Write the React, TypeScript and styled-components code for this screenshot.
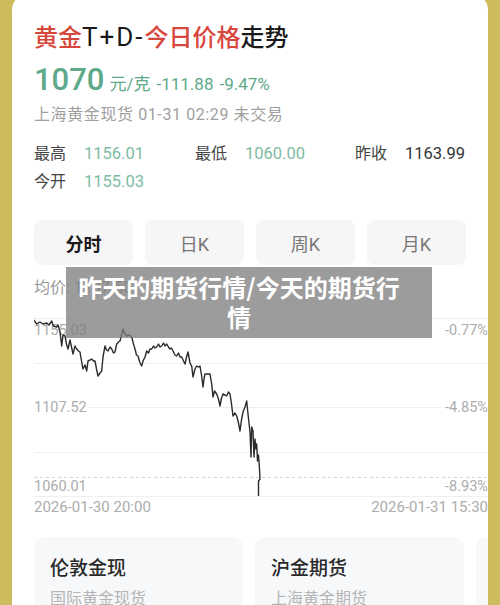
import React from "react";
import styled, { createGlobalStyle } from "styled-components";

const GlobalStyle = createGlobalStyle`
  html, body { margin: 0; padding: 0; }
  body {
    background: #cdbc5d;
    font-family: "Roboto", "Noto Sans CJK SC", sans-serif;
    overflow: hidden;
  }
`;

const Page = styled.div`
  position: relative;
  width: 500px;
  height: 605px;
  overflow: hidden;
`;

const Card = styled.div`
  margin: -6px 12px 0;
  height: 611px;
  background: #ffffff;
  border-radius: 16px 16px 0 0;
  padding: 26px 22px 0;
  box-sizing: border-box;
  overflow: hidden;
`;

const Title = styled.h1`
  margin: 0;
  font-size: 24px;
  line-height: 32px;
  font-weight: 500;
  color: #1a1a1a;
  font-family: "Noto Sans CJK SC", sans-serif;
`;

const Red = styled.span`
  color: #d8473c;
`;

const Latin = styled.span`
  font-family: "Roboto", "Noto Sans CJK SC", sans-serif;
  font-size: 26px;
  font-weight: 400;
  letter-spacing: 2px;
`;

const PriceRow = styled.div`
  margin-top: 7px;
  display: flex;
  align-items: baseline;
  gap: 6px;
  color: #5ea98a;
`;

const BigPrice = styled.span`
  font-size: 31px;
  line-height: 40px;
  font-weight: 500;
  margin-right: -1px;
`;

const Small = styled.span`
  font-size: 17px;
`;

const Info = styled.div`
  margin-top: 4px;
  font-size: 16px;
  line-height: 22px;
  letter-spacing: 0.6px;
  color: #a0a0a0;
`;

const Stats = styled.div`
  margin-top: 14px;
  display: grid;
  grid-template-columns: 161px 160px 1fr;
`;

const Stat = styled.div`
  display: flex;
  font-size: 16px;
  line-height: 28px;
`;

const StatLabel = styled.span`
  width: 50px;
  color: #444;
`;

const StatValue = styled.span<{ $dark?: boolean }>`
  color: ${(p) => (p.$dark ? "#333" : "#7dbca3")};
  font-size: 16.5px;
`;

const Tabs = styled.div`
  margin-top: 24px;
  display: grid;
  grid-template-columns: repeat(4, 1fr);
  gap: 12px;
`;

const Tab = styled.div<{ $active?: boolean }>`
  height: 45px;
  border-radius: 8px;
  background: #f6f6f6;
  display: flex;
  align-items: center;
  justify-content: center;
  font-size: 18px;
  font-weight: ${(p) => (p.$active ? 700 : 400)};
  color: ${(p) => (p.$active ? "#1a1a1a" : "#777")};
`;

const AvgLine = styled.div`
  margin-top: 12px;
  font-size: 16px;
  line-height: 22px;
  color: #999;
`;

const ChartWrap = styled.div`
  margin-right: -22px;
  height: 220px;
`;

const Cards = styled.div`
  margin-top: 18px;
  margin-right: -22px;
  display: flex;
  gap: 12px;
  overflow: hidden;
`;

const MiniCard = styled.div`
  flex: 0 0 209px;
  box-sizing: border-box;
  height: 90px;
  border-radius: 10px;
  background: #f7f8fa;
  padding: 20px 16px 0;
`;

const MiniTitle = styled.div`
  font-size: 19px;
  line-height: 24px;
  color: #2a2a2a;
  font-weight: 500;
`;

const MiniSub = styled.div`
  margin-top: 7px;
  font-size: 16px;
  line-height: 22px;
  color: #b5b5b5;
`;

const Overlay = styled.div`
  position: absolute;
  left: 66px;
  top: 267px;
  width: 366px;
  height: 71px;
  box-sizing: border-box;
  padding: 5px 32px 0 12px;
  background: rgba(125, 125, 125, 0.76);
  color: #ffffff;
  font-family: "Noto Sans CJK SC", sans-serif;
  font-weight: 700;
  font-size: 24px;
  line-height: 30px;
  text-align: center;
`;

const raw: [number, number][] = [
  [33, 320], [36.7, 325], [40, 323], [43, 325], [46.7, 324], [49, 326], [51.7, 322], [53.3, 327],
  [56.7, 328], [58, 326], [60, 333], [61.7, 347], [63, 336], [65, 337], [66.5, 345], [68, 350],
  [70, 341], [71.5, 348], [73, 355], [75, 347], [76.7, 350], [78.5, 352], [80, 353], [81.5, 362],
  [83, 370], [85, 366], [86.7, 372], [88, 362], [90, 361], [91.7, 360], [93.5, 362], [95, 362],
  [96.5, 370], [98, 377], [100, 374], [101.7, 372], [103, 358], [105, 347], [106.5, 351], [108, 352],
  [110, 348], [111.7, 350], [113.5, 354], [115, 353], [116.7, 345], [118.5, 343], [120, 342],
  [121.5, 336], [123, 330], [124.5, 334], [126.7, 337], [129, 336], [131.7, 338], [133.5, 345],
  [135, 350], [136.5, 356], [138, 357], [140, 364], [141.7, 367], [143, 362], [145, 358], [146.7, 352],
  [148.5, 354], [150, 350], [151.7, 350], [153.5, 347], [155, 349], [156.7, 348], [158.5, 345],
  [160, 348], [161.7, 347], [163.5, 344], [165, 347], [166.7, 345], [168.5, 348], [170, 350],
  [171.5, 349], [173, 352], [175, 356], [176.7, 357], [178.5, 354], [180, 358], [181.7, 358],
  [183.5, 362], [185, 365], [186.5, 358], [188, 353], [190, 364], [191.7, 367], [193, 378],
  [195, 370], [196.7, 367], [198.5, 368], [200, 367], [201.5, 376], [203, 388], [204, 380],
  [205, 375], [207, 375], [210, 375], [211.7, 385], [213, 398], [214.5, 392], [216.7, 395],
  [218.5, 400], [220, 407], [221.5, 399], [223, 395], [225, 396], [226.7, 397], [228.5, 393],
  [230, 395], [231.5, 405], [233, 417], [235, 414], [236.7, 417], [238.5, 424], [240, 432],
  [241.5, 421], [243, 413], [245, 408], [246.7, 402], [248, 415], [250, 433], [251, 458],
  [251.7, 428], [253, 432], [254, 458], [255, 440], [256, 450], [256.7, 445], [257.5, 462],
  [258.5, 456], [259.5, 470], [260, 480], [258.5, 482], [258.5, 497],
];

const linePoints = raw.map(([x, y]) => `${(x - 34).toFixed(1)},${(y - 300).toFixed(1)}`).join(" ");

const axisFont = `"Roboto", "Noto Sans CJK SC", sans-serif`;

function Chart() {
  const W = 454;
  return (
    <ChartWrap>
      <svg width={W} height={220} viewBox={`0 0 ${W} 220`}>
        <g stroke="#efefef" strokeWidth="1">
          <line x1="0" y1="19.5" x2={W} y2="19.5" />
          <line x1="0" y1="64.5" x2={W} y2="64.5" />
          <line x1="54" y1="108.5" x2="407" y2="108.5" />
          <line x1="0" y1="153.5" x2={W} y2="153.5" />
          <line x1="0" y1="197.5" x2={W} y2="197.5" />
        </g>
        <line x1="0" y1="178.5" x2={W} y2="178.5" stroke="#d4d4d4" strokeWidth="1" strokeDasharray="3 3" />
        <g fill="#acacac" fontSize="14.5" fontFamily={axisFont}>
          <text x="0" y="36">1155.03</text>
          <text x="0" y="113">1107.52</text>
          <text x="0" y="192">1060.01</text>
          <text x={W} y="36" textAnchor="end">-0.77%</text>
          <text x={W} y="113" textAnchor="end">-4.85%</text>
          <text x={W} y="192" textAnchor="end">-8.93%</text>
        </g>
        <g fill="#acacac" fontSize="15" fontFamily={axisFont}>
          <text x="0" y="213">2026-01-30 20:00</text>
          <text x={W} y="213" textAnchor="end">2026-01-31 15:30</text>
        </g>
        <polyline points={linePoints} fill="none" stroke="#2b2b2b" strokeWidth="1.4" strokeLinejoin="round" />
      </svg>
    </ChartWrap>
  );
}

export default function App() {
  return (
    <Page>
      <GlobalStyle />
      <Card>
        <Title>
          <Red>黄金</Red>
          <Latin>T+D-</Latin>
          <Red>今日价格</Red>走势
        </Title>
        <PriceRow>
          <BigPrice>1070</BigPrice>
          <Small>元/克</Small>
          <Small>-111.88</Small>
          <Small>-9.47%</Small>
        </PriceRow>
        <Info>上海黄金现货 01-31 02:29 未交易</Info>
        <Stats>
          <Stat>
            <StatLabel>最高</StatLabel>
            <StatValue>1156.01</StatValue>
          </Stat>
          <Stat>
            <StatLabel>最低</StatLabel>
            <StatValue>1060.00</StatValue>
          </Stat>
          <Stat>
            <StatLabel>昨收</StatLabel>
            <StatValue $dark>1163.99</StatValue>
          </Stat>
          <Stat>
            <StatLabel>今开</StatLabel>
            <StatValue>1155.03</StatValue>
          </Stat>
        </Stats>
        <Tabs>
          <Tab $active>分时</Tab>
          <Tab>日K</Tab>
          <Tab>周K</Tab>
          <Tab>月K</Tab>
        </Tabs>
        <AvgLine>均价: 1107.50</AvgLine>
        <Chart />
        <Cards>
          <MiniCard>
            <MiniTitle>伦敦金现</MiniTitle>
            <MiniSub>国际黄金现货</MiniSub>
          </MiniCard>
          <MiniCard>
            <MiniTitle>沪金期货</MiniTitle>
            <MiniSub>上海黄金期货</MiniSub>
          </MiniCard>
          <MiniCard>
            <MiniTitle>纽约金</MiniTitle>
            <MiniSub>COMEX黄金</MiniSub>
          </MiniCard>
        </Cards>
      </Card>
      <Overlay>昨天的期货行情/今天的期货行情</Overlay>
    </Page>
  );
}
